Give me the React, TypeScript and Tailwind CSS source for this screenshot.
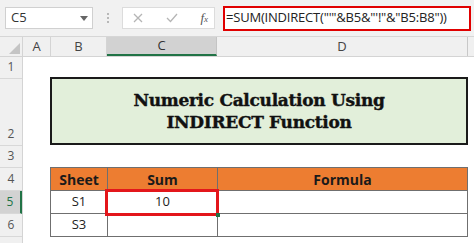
import React from "react";

const cal = { fontFamily: '"Open Sans", "Liberation Sans", sans-serif' };

export default function App() {
  const rows: { n: string; h: string; active?: boolean }[] = [
    { n: "1", h: "h-[22px]" },
    { n: "2", h: "h-[67px]" },
    { n: "3", h: "h-[22px]" },
    { n: "4", h: "h-[23px]" },
    { n: "5", h: "h-[23px]", active: true },
    { n: "6", h: "h-[23px]" },
    { n: "", h: "h-[23px]" },
  ];
  return (
    <div className="w-[474px] h-[243px] overflow-hidden bg-white text-[#222]" style={cal}>
      {/* formula bar */}
      <div className="h-[37px] bg-[#f1f1f1] flex items-center border-b border-[#d6d6d6]">
        <div className="ml-[5px] w-[88px] h-[22px] bg-white border border-[#d0d0d0] flex items-center justify-between pl-[5px] pr-[4px] text-[13px] text-[#333]">
          <span>C5</span>
          <svg width="8" height="5" viewBox="0 0 8 5"><path d="M0 0h8L4 5z" fill="#666" /></svg>
        </div>
        <div className="w-[29px] flex flex-col items-center gap-[2px]">
          <span className="w-[2px] h-[2px] bg-[#b8b8b8]" />
          <span className="w-[2px] h-[2px] bg-[#b8b8b8]" />
          <span className="w-[2px] h-[2px] bg-[#b8b8b8]" />
        </div>
        <div className="w-[93px] h-[22px] bg-white border border-[#dcdcdc] flex items-center justify-between pl-[10px] pr-[6px]">
          <svg width="10" height="10" viewBox="0 0 10 10"><path d="M1 1L9 9M9 1L1 9" stroke="#b5b5b5" strokeWidth="1.3" /></svg>
          <svg width="12" height="10" viewBox="0 0 12 10"><path d="M1 5L4.5 8.5L11 1" stroke="#b5b5b5" strokeWidth="1.3" fill="none" /></svg>
          <span className="text-[13px] italic text-[#555]" style={{ fontFamily: '"Liberation Serif", serif' }}>
            f<span className="text-[9px]">x</span>
          </span>
        </div>
        <div className="ml-[8px] w-[248px] h-[25px] border-2 border-[#e00000] bg-white flex items-center pl-[1px] text-[13px] text-[#222] tracking-[-0.2px] whitespace-nowrap">
          =SUM(INDIRECT("'"&amp;B5&amp;"'!"&amp;"B5:B8"))
        </div>
      </div>
      {/* column headers */}
      <div className="h-[20px] flex bg-[#f0f0f0] border-b border-[#d4d4d4] text-[13px] text-[#444]">
        <div className="w-[23px] relative border-r border-[#d4d4d4]">
          <svg className="absolute right-[2px] bottom-[2px]" width="11" height="11" viewBox="0 0 11 11"><path d="M11 0V11H0z" fill="#c4c4c4" /></svg>
        </div>
        <div className="w-[28px] flex items-center justify-center border-r border-[#d4d4d4]">A</div>
        <div className="w-[56px] flex items-center justify-center border-r border-[#d4d4d4]">B</div>
        <div className="w-[110px] flex items-center justify-center bg-[#d2d2d2] border-b-2 border-[#217346] border-r border-r-[#c4c4c4] text-[#333]">C</div>
        <div className="w-[251px] flex items-center justify-center border-r border-[#c8c8c8]">D</div>
        <div className="flex-1" />
      </div>
      {/* body */}
      <div className="flex">
        <div className="w-[23px] flex flex-col bg-[#f0f0f0] border-r border-[#d4d4d4] text-[12px] text-[#555]">
          {rows.map((r, i) => (
            <div
              key={i}
              className={`${r.h} flex items-end justify-center pb-[2px] border-b border-[#d8d8d8] ${r.active ? "bg-[#d2d2d2] border-r-2 border-r-[#217346] text-[#217346]" : ""}`}
            >
              {r.n}
            </div>
          ))}
        </div>
        <div className="flex-1 flex flex-col">
          <div className="h-[20px]" />
          <div className="ml-[27px] w-[418px] h-[68px] bg-[#e2efda] border-2 border-[#1a1a1a] flex flex-col items-center justify-center leading-[22px] text-[17px] font-bold text-[#111] [-webkit-text-stroke:0.4px_#111]" style={{ fontFamily: '"DejaVu Serif", "Liberation Serif", serif' }}>
            <span className="tracking-[-0.3px]">Numeric Calculation Using</span>
            <span className="tracking-[-0.3px]">INDIRECT Function</span>
          </div>
          <div className="h-[22px]" />
          <div className="ml-[27px] w-[418px] grid grid-cols-[57px_110px_1fr] border border-[#6f6f6f] text-[14px]">
            <div className="h-[23px] bg-[#ed7d31] border-r border-b border-[#6f6f6f] flex items-center justify-center font-bold text-[#1a1a1a]">Sheet</div>
            <div className="h-[23px] bg-[#ed7d31] border-r border-b border-[#6f6f6f] flex items-center justify-center font-bold text-[#1a1a1a]">Sum</div>
            <div className="h-[23px] bg-[#ed7d31] border-b border-[#6f6f6f] flex items-center justify-center font-bold text-[#1a1a1a]">Formula</div>
            <div className="h-[23px] border-r border-b border-[#6f6f6f] flex items-center justify-center text-[13px]">S1</div>
            <div className="h-[23px] border-r border-b border-[#6f6f6f] flex items-center justify-center relative text-[13px]">
              10
              <div className="absolute -left-[3px] -top-[2px] -right-[2px] -bottom-[3px] border-[3px] border-[#e3161b]" />
              <div className="absolute -right-[3px] -bottom-[4px] w-[4px] h-[4px] bg-[#217346]" />
            </div>
            <div className="h-[23px] border-b border-[#6f6f6f]" />
            <div className="h-[22px] border-r border-[#6f6f6f] flex items-center justify-center text-[13px]">S3</div>
            <div className="h-[22px] border-r border-[#6f6f6f]" />
            <div className="h-[22px]" />
          </div>
        </div>
      </div>
    </div>
  );
}
